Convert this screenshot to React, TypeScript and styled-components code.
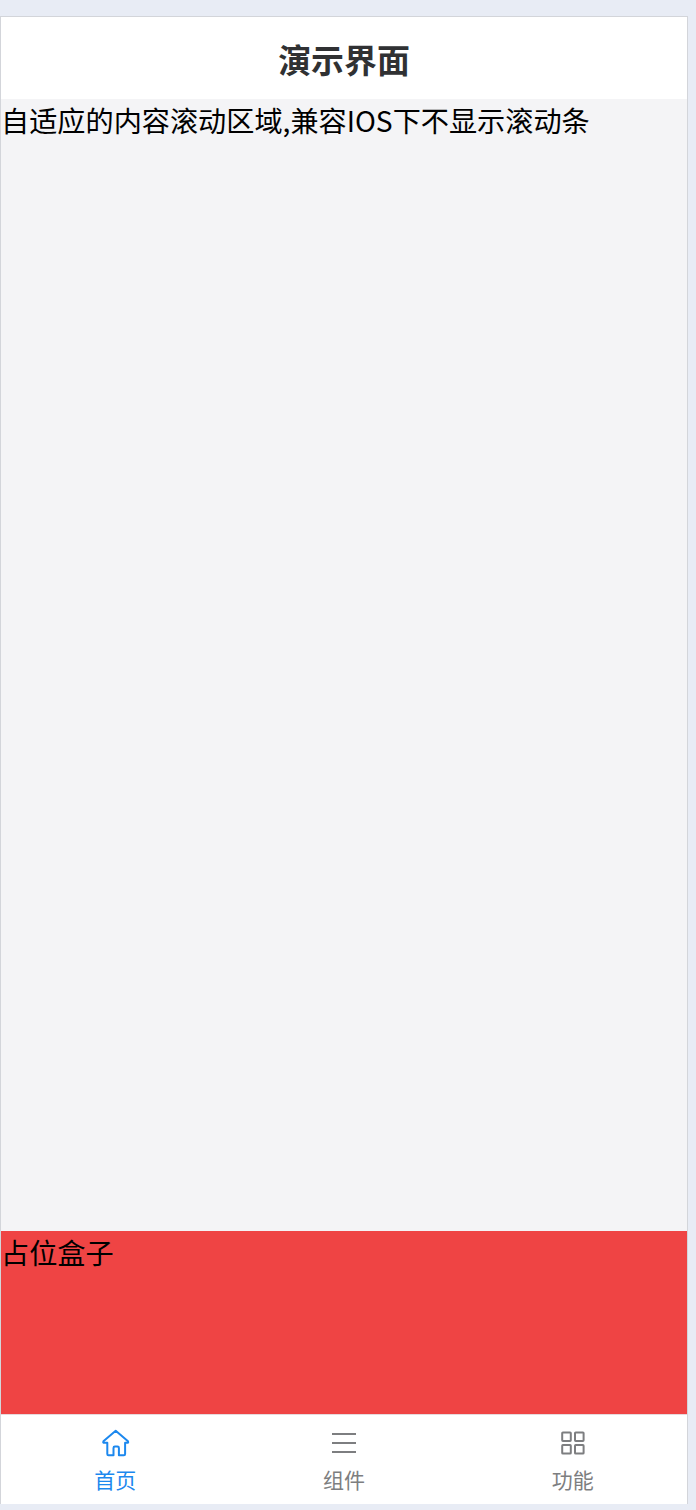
import React, { useState } from "react";
import styled, { createGlobalStyle } from "styled-components";

const GlobalStyle = createGlobalStyle`
  * { box-sizing: border-box; }
  body {
    margin: 0;
    background: #e8ecf5;
    font-family: "Noto Sans CJK SC", sans-serif;
    overflow: hidden;
  }
`;

const Page = styled.div`
  height: 1510px;
  padding: 16px 8px 6px 0;
`;

const Phone = styled.main`
  display: flex;
  flex-direction: column;
  height: 1488px;
  border: 1px solid #d3d5da;
  border-bottom: 0;
  background: #fff;
`;

const NavBar = styled.header`
  display: flex;
  flex: none;
  align-items: center;
  justify-content: center;
  height: 82px;
  padding-top: 2px;
`;

const Title = styled.h1`
  margin: 0;
  font-size: 32.9px;
  line-height: 48px;
  font-weight: 700;
  color: #303133;
`;

const ScrollArea = styled.section`
  flex: 1;
  min-height: 0;
  overflow: auto;
  scrollbar-width: none;
  background: #f4f4f6;
`;

const Placeholder = styled.section`
  flex: none;
  height: 183px;
  background: #ef4444;
`;

const BodyText = styled.p`
  margin: 0;
  font-size: 28.17px;
  line-height: 42px;
  white-space: nowrap;
  color: #000;
`;

const TabBar = styled.nav`
  display: flex;
  flex: none;
  height: 90px;
  border-top: 1px solid #e6d9dc;
`;

const Tab = styled.button<{ $active: boolean }>`
  display: flex;
  flex: 1;
  flex-direction: column;
  align-items: center;
  padding: 13px 0 0;
  border: 0;
  background: none;
  font: inherit;
  color: ${(p) => (p.$active ? "#1c88ee" : "#7d7e80")};
`;

const TabIcon = styled.svg`
  display: block;
  width: 30px;
  height: 30px;
  fill: none;
  stroke: currentColor;
  stroke-width: 2;
  stroke-linejoin: round;
`;

const TabLabel = styled.span`
  margin-top: 6px;
  font-size: 21px;
  line-height: 30px;
`;

const tabs = [
  {
    label: "首页",
    icon: (
      <path d="M15.7 2.8 L28 13.3 Q28.7 14.8 27.1 14.8 H25.1 V26 Q25.1 27.3 23.9 27.3 H18.9 V20 Q18.9 18.6 17.5 18.6 H14.9 Q13.5 18.6 13.5 20 V27.3 H8.5 Q7.3 27.3 7.3 26 V14.8 H4.3 Q2.7 14.8 3.4 13.3 Z" />
    ),
  },
  {
    label: "组件",
    icon: <path d="M3 6h24M3 15h24M3 24h24" />,
  },
  {
    label: "功能",
    icon: (
      <>
        <rect x="4.2" y="4.4" width="8.6" height="8.6" rx="0.7" />
        <rect x="17" y="4.4" width="8.6" height="8.6" rx="0.7" />
        <rect x="4.2" y="17" width="8.6" height="8.6" rx="0.7" />
        <rect x="17" y="17" width="8.6" height="8.6" rx="0.7" />
      </>
    ),
  },
];

export default function App() {
  const [active, setActive] = useState(0);
  return (
    <>
      <GlobalStyle />
      <Page>
        <Phone>
          <NavBar>
            <Title>演示界面</Title>
          </NavBar>
          <ScrollArea>
            <BodyText>自适应的内容滚动区域,兼容IOS下不显示滚动条</BodyText>
          </ScrollArea>
          <Placeholder>
            <BodyText>占位盒子</BodyText>
          </Placeholder>
          <TabBar>
            {tabs.map((tab, i) => (
              <Tab key={tab.label} $active={i === active} onClick={() => setActive(i)}>
                <TabIcon viewBox="0 0 30 30">{tab.icon}</TabIcon>
                <TabLabel>{tab.label}</TabLabel>
              </Tab>
            ))}
          </TabBar>
        </Phone>
      </Page>
    </>
  );
}
